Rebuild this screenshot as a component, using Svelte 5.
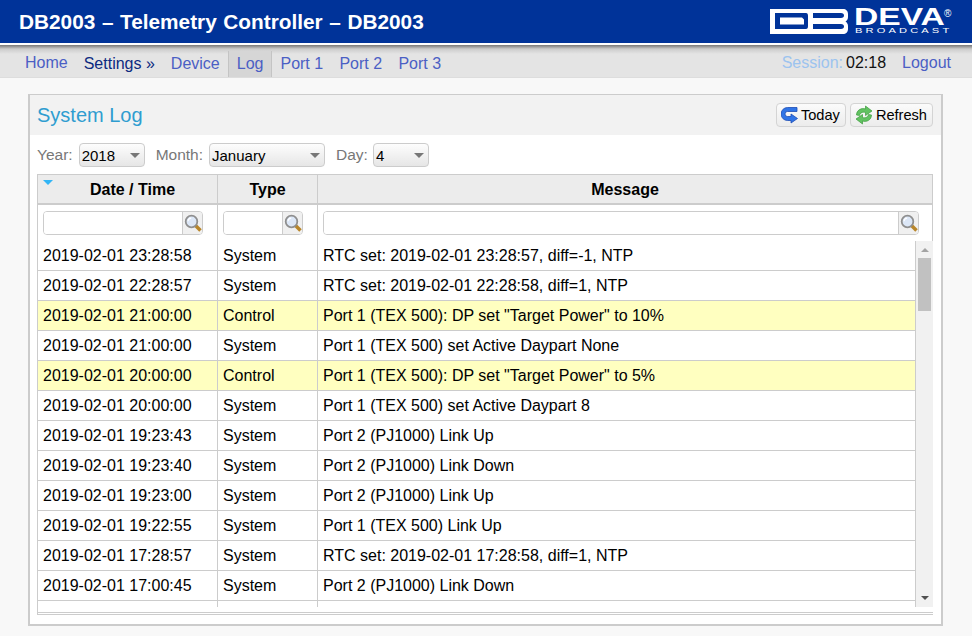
<script lang="ts">
	const navItems = [
		{ label: 'Home', cls: 'home' },
		{ label: 'Settings »', cls: 'settings' },
		{ label: 'Device', cls: 'device' },
		{ label: 'Log', cls: 'active' },
		{ label: 'Port 1', cls: '' },
		{ label: 'Port 2', cls: '' },
		{ label: 'Port 3', cls: '' }
	];

	const rows = [
		{ time: '2019-02-01 23:28:58', type: 'System', msg: 'RTC set: 2019-02-01 23:28:57, diff=-1, NTP' },
		{ time: '2019-02-01 22:28:57', type: 'System', msg: 'RTC set: 2019-02-01 22:28:58, diff=1, NTP' },
		{ time: '2019-02-01 21:00:00', type: 'Control', msg: 'Port 1 (TEX 500): DP set "Target Power" to 10%' },
		{ time: '2019-02-01 21:00:00', type: 'System', msg: 'Port 1 (TEX 500) set Active Daypart None' },
		{ time: '2019-02-01 20:00:00', type: 'Control', msg: 'Port 1 (TEX 500): DP set "Target Power" to 5%' },
		{ time: '2019-02-01 20:00:00', type: 'System', msg: 'Port 1 (TEX 500) set Active Daypart 8' },
		{ time: '2019-02-01 19:23:43', type: 'System', msg: 'Port 2 (PJ1000) Link Up' },
		{ time: '2019-02-01 19:23:40', type: 'System', msg: 'Port 2 (PJ1000) Link Down' },
		{ time: '2019-02-01 19:23:00', type: 'System', msg: 'Port 2 (PJ1000) Link Up' },
		{ time: '2019-02-01 19:22:55', type: 'System', msg: 'Port 1 (TEX 500) Link Up' },
		{ time: '2019-02-01 17:28:57', type: 'System', msg: 'RTC set: 2019-02-01 17:28:58, diff=1, NTP' },
		{ time: '2019-02-01 17:00:45', type: 'System', msg: 'Port 2 (PJ1000) Link Down' },
		{ time: '', type: '', msg: '' }
	];

	const filters = ['date', 'type', 'msg'];
</script>

{#snippet lens()}
	<svg width="18" height="18" viewBox="0 0 18 18">
		<path d="M11.500 11.500 L16.500 16.500" stroke="#b8862b" stroke-width="3.6" />
		<circle cx="7.500" cy="7.500" r="5.800" fill="#dce7f7" stroke="#8f8f8f" stroke-width="1.800" />
		<path d="M4 7.300a3.500 3.500 0 0 1 3.200-3.200" fill="none" stroke="#fff" stroke-width="1.100" />
	</svg>
{/snippet}

<div class="page">
	<header class="top">
		<h1>DB2003 – Telemetry Controller – DB2003</h1>
		<div class="logo">
			<svg width="78" height="25" viewBox="0 0 78 25">
				<path fill="#fff" fill-rule="evenodd" d="M0 0H73C76 0 78 2 78 5V8C78 10 77 11.500 75.500 12.500 77 13.500 78 15 78 17V20C78 23 76 25 73 25H0ZM5 4V20H36C37.500 20 38 19 38 17V7C38 5 37.500 4 36 4ZM10 8.500H32L34 10.500V15.500H10ZM43 4V9H71C73 9 74 8 74 6.500S73 4 71 4ZM43 15V20H71C73 20 74 19 74 17.500S73 15 71 15Z" />
			</svg>
			<div class="brand">
				<div class="name">
					<span class="deva">DEVA</span>
					<span class="reg">®</span>
				</div>
				<span class="broadcast">BROADCAST</span>
			</div>
		</div>
	</header>

	<nav class="menu">
		<ul>
			{#each navItems as item}
				<li class={item.cls}>{item.label}</li>
			{/each}
		</ul>
		<div class="session">
			<span class="s-label">Session:</span>
			<span class="s-time">02:18</span>
			<span class="logout">Logout</span>
		</div>
	</nav>

	<main class="panel">
		<div class="panel-head">
			<h2>System Log</h2>
			<div class="actions">
				<button class="today">
					<svg width="18" height="18" viewBox="0 0 18 18">
						<path d="M16 1.500H6.500A6.500 6.500 0 0 0 6.500 14.500H10V17L16.500 12.500 10 8V10.500H6.500A2.500 2.500 0 0 1 6.500 5.500H16Z" fill="#2f74e6" stroke="#1c4bb4" stroke-width=".8" />
					</svg>
					Today
				</button>
				<button class="refresh">
					<svg width="20" height="20" viewBox="0 0 20 20">
						<path d="M2.500 10C2.500 5.500 7 2.500 11.500 4V1L18 6 11.500 10.500V7.500C8.500 6.500 6 8 5.500 10.500Z" fill="#62c262" stroke="#3c9c3c" stroke-width=".7" />
						<path d="M17.500 10C17.500 14.500 13 17.500 8.500 16V19L2 14 8.500 9.500V12.500C11.500 13.500 14 12 14.500 9.500Z" fill="#62c262" stroke="#3c9c3c" stroke-width=".7" />
					</svg>
					Refresh
				</button>
			</div>
		</div>

		<div class="content">
			<div class="selectors">
				<label>Year: <span class="sel year">2018</span></label>
				<label>Month: <span class="sel month">January</span></label>
				<label>Day: <span class="sel day">4</span></label>
			</div>

			<div class="grid">
				<div class="row head">
					<div class="c date"><span class="sort"></span>Date / Time</div>
					<div class="c type">Type</div>
					<div class="c msg">Message</div>
				</div>
				<div class="row filter">
					{#each filters as f}
						<div class="c {f}">
							<div class="search">
								<input type="text" />
								<span class="go">{@render lens()}</span>
							</div>
						</div>
					{/each}
				</div>
				<div class="scroller">
					<div class="list">
						{#each rows as r}
							<div class="row item" class:hl={r.type === 'Control'}>
								<div class="c date">{r.time}</div>
								<div class="c type">{r.type}</div>
								<div class="c msg">{r.msg}</div>
							</div>
						{/each}
					</div>
					<div class="bar">
						<span class="up"></span>
						<span class="thumb"></span>
						<span class="down"></span>
					</div>
				</div>
				<div class="foot"></div>
			</div>
		</div>
	</main>
</div>

<style>
	:global(body) {
		margin: 0;
		background: #f8f8f8;
		font-family: 'Liberation Sans', Arial, sans-serif;
		font-size: 16px;
		color: #000;
	}

	.page {
		height: 636px;
		overflow: hidden;
	}

	.top {
		height: 43px;
		background: #003399;
		display: flex;
		justify-content: space-between;
		align-items: center;
		padding: 0 20px 0 19px;
	}

	h1 {
		margin: 0;
		font-size: 20.8px;
		font-weight: 700;
		color: #fff;
		word-spacing: 0.8px;
	}

	.logo {
		display: flex;
		gap: 6px;
		align-self: flex-start;
		padding-top: 8px;
	}

	.logo svg {
		display: block;
		margin-top: 1px;
	}

	.brand {
		display: flex;
		flex-direction: column;
		width: 98px;
		color: #fff;
	}

	.name {
		display: flex;
		height: 19px;
	}

	.deva {
		display: block;
		width: 90px;
		font-size: 24px;
		line-height: 18px;
		font-weight: 700;
		transform-origin: left;
		transform: scaleX(1.4);
	}

	.reg {
		font-size: 10px;
		line-height: 12px;
	}

	.broadcast {
		margin: 1px 0 0 1px;
		font-size: 7.4px;
		line-height: 6px;
		letter-spacing: 2.1px;
		transform-origin: left;
		transform: scaleX(1.5);
		white-space: nowrap;
		width: 60px;
	}

	.menu {
		height: 32px;
		border-top: 2px solid #fff;
		border-bottom: 1px solid #ddd;
		background: linear-gradient(#777 0, #ccc 4px, #e4e4e4 9px);
		display: flex;
		justify-content: space-between;
		padding: 0 21px 0 16px;
	}

	ul {
		display: flex;
		list-style: none;
		margin: 6px 0 0;
		padding: 0;
		height: 26px;
	}

	li {
		padding: 0 7.300px 0 8px;
		line-height: 25px;
		color: #4b5fc4;
		border-left: 1px solid transparent;
		border-right: 1px solid transparent;
		margin-right: -1px;
	}

	li.home {
		line-height: 23px;
		padding-right: 7px;
	}

	li.settings {
		color: #0d2a80;
		padding-right: 7px;
	}

	li.device {
		padding-right: 8px;
	}

	li.active {
		background: #d6d6d6;
		border-color: #c4c4c4;
		padding-right: 8px;
	}

	.session {
		display: flex;
		align-items: center;
		height: 36px;
	}

	.s-label {
		color: #9cc3ef;
		margin-right: 3px;
	}

	.s-time {
		color: #111;
		margin-right: 16px;
	}

	.logout {
		color: #4b5fc4;
	}

	.panel {
		margin: 16px 29px 0 28px;
		height: 529px;
		border: 2px solid #ccc;
		border-top-width: 1px;
		background: #fff;
	}

	.panel-head {
		height: 40px;
		background: #f2f2f2;
		display: flex;
		justify-content: space-between;
		align-items: center;
		padding: 0 8px 0 7px;
	}

	h2 {
		margin: 0;
		font-size: 20px;
		font-weight: 400;
		color: #2f9dd0;
	}

	.actions {
		display: flex;
		gap: 4px;
	}

	button {
		height: 24px;
		display: flex;
		align-items: center;
		gap: 2px;
		font: 14.6px 'Liberation Sans', Arial, sans-serif;
		color: #000;
		background: linear-gradient(#fbfbfb, #ececec);
		border: 1px solid #d4d4d4;
		border-radius: 4px;
	}

	.today {
		padding: 0 5px 0 4px;
	}

	.refresh {
		padding: 0 5px 0 3px;
	}

	.content {
		padding: 8px 7px 0 7px;
	}

	.selectors {
		display: flex;
		gap: 11px;
		height: 24px;
	}

	label {
		color: #777;
		font-size: 15.500px;
		display: flex;
		align-items: center;
		gap: 6px;
	}

	.sel {
		box-sizing: border-box;
		height: 24px;
		line-height: 23px;
		font-size: 15px;
		color: #000;
		padding-left: 2px;
		background: linear-gradient(#fdfdfd, #e6e6e6);
		border: 1px solid #ccc;
		border-radius: 4px;
		position: relative;
	}

	.sel::after {
		content: '';
		position: absolute;
		right: 4px;
		top: 9px;
		border: 5px solid transparent;
		border-top: 5px solid #777;
		border-bottom: 0;
	}

	.year {
		width: 66px;
	}

	.month {
		width: 116px;
	}

	.day {
		width: 56px;
		margin-left: -1px;
	}

	.grid {
		margin-top: 7px;
		width: 896px;
		border-left: 1px solid #ccc;
		box-sizing: border-box;
	}

	.row {
		display: flex;
	}

	.c {
		box-sizing: border-box;
		border-right: 1px solid #ccc;
		padding: 0 5px;
	}

	.date {
		width: 180px;
	}

	.type {
		width: 100px;
	}

	.msg {
		flex: 1;
		border-right: 0;
	}

	.head {
		height: 31px;
		background: #ececec;
		border-top: 1px solid #ccc;
		border-bottom: 2px solid #ccc;
		border-right: 1px solid #ccc;
		box-sizing: border-box;
		font-weight: 700;
		text-align: center;
		line-height: 30px;
	}

	.head .c {
		position: relative;
	}

	.head .date {
		padding-left: 15px;
	}

	.sort {
		position: absolute;
		left: 5px;
		top: 5px;
		border: 5px solid transparent;
		border-top: 5px solid #33b5f5;
		border-bottom: 0;
	}

	.filter {
		height: 36px;
		box-sizing: border-box;
		border-right: 1px solid #ccc;
	}

	.filter .c {
		padding: 6px 14px 0 5px;
	}

	.filter .c.msg {
		padding-right: 13px;
	}

	.search {
		display: flex;
		height: 24px;
		box-sizing: border-box;
		border: 1px solid #ccc;
		border-radius: 4px;
		overflow: hidden;
		background: #fff;
	}

	.search input {
		flex: 1;
		min-width: 0;
		border: 0;
		padding: 0;
		outline: 0;
	}

	.go {
		box-sizing: border-box;
		width: 20px;
		background: #f0f0f0;
		border-left: 1px solid #ccc;
		display: flex;
		align-items: center;
		justify-content: center;
	}

	.scroller {
		display: flex;
		height: 366px;
		overflow: hidden;
	}

	.list {
		width: 878px;
		overflow: hidden;
		border-right: 1px solid #ccc;
		box-sizing: border-box;
	}

	.item {
		height: 30px;
		box-sizing: border-box;
		border-bottom: 1px solid #ccc;
		line-height: 29px;
	}

	.item.hl {
		background: #ffffc0;
	}

	.bar {
		width: 17px;
		background: #f1f1f1;
		display: flex;
		flex-direction: column;
		align-items: center;
	}

	.up {
		margin-top: 7px;
		border: 4px solid transparent;
		border-bottom: 4px solid #a3a3a3;
		border-top: 0;
	}

	.thumb {
		margin-top: 6px;
		width: 13px;
		height: 53px;
		background: #c1c1c1;
	}

	.down {
		margin-top: auto;
		margin-bottom: 7px;
		border: 4px solid transparent;
		border-top: 4px solid #505050;
		border-bottom: 0;
	}

	.foot {
		margin-top: 5px;
		margin-left: -1px;
		width: 896px;
		height: 3px;
		box-sizing: border-box;
		border-top: 1px solid #ccc;
		border-bottom: 1px solid #ccc;
	}
</style>
